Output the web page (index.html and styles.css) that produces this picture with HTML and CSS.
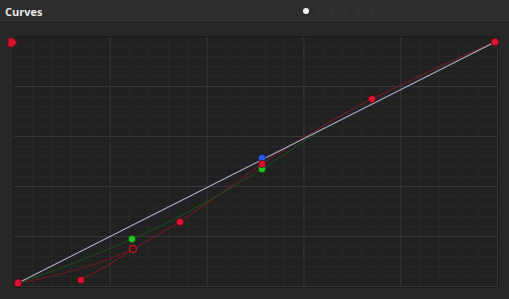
FILE: index.html
```html
<!DOCTYPE html>
<html lang="en">

<head>
    <meta charset="UTF-8">
    <title>Curves</title>
    <link rel="stylesheet" href="styles.css">
</head>

<body>
    <div class="panel">
        <div class="header">
            <span class="title">Curves</span>
            <div class="pager">
                <span class="dot active"></span>
                <span class="dot"></span>
                <span class="dot"></span>
                <span class="dot"></span>
                <span class="dot"></span>
                <span class="dot"></span>
            </div>
        </div>

        <div class="graph-wrap">
            <div class="graph">
                <svg class="curves" width="484" height="250" viewBox="0 0 484 250">
                    <!-- soft clip marker -->
                    <path d="M-6,2 Q-6,1 -5,1 H-1 L3,5.5 L-1,10 H-5 Q-6,10 -6,9 Z" fill="#d3142c" stroke="#6a0a14" stroke-width="0.8"/>

                    <!-- red -->
                    <path d="M4,246 C45,239 90,226 119,212" fill="none" stroke="#6e1a20" stroke-width="1"/>
                    <path d="M67,243 Q95,229 119,212" fill="none" stroke="#7c1a22" stroke-width="1"/>
                    <path d="M119,212 L166,185 C200,162 225,143 248,127 C290,100 322,80 358,62 C400,42 440,22 481,5" fill="none" stroke="#7c1a22" stroke-width="1"/>

                    <!-- green -->
                    <path d="M4,246 C50,231 90,214 118,202 C170,180 215,152 248,132 C280,112 300,96 321,86 L481,5" fill="none" stroke="#1c4e1c" stroke-width="1"/>

                    <!-- master -->
                    <path d="M4,246 L481,5" fill="none" stroke="#a7a7c6" stroke-width="1.2"/>

                    <circle cx="119" cy="212" r="3.6" fill="#3a1416" stroke="#b5162a" stroke-width="1.5"/>
                    <circle cx="118" cy="202" r="3.6" fill="#27c427" stroke="#0f4a0f" stroke-width="0.8"/>
                    <circle cx="248" cy="132" r="3.6" fill="#27c427" stroke="#0f4a0f" stroke-width="0.8"/>
                    <circle cx="248" cy="121" r="3.6" fill="#2a5ef0" stroke="#10245e" stroke-width="0.8"/>
                    <circle cx="248" cy="127" r="3.6" fill="#dc1230" stroke="#5e0a12" stroke-width="0.8"/>
                    <circle cx="67" cy="243" r="3.6" fill="#dc1230" stroke="#5e0a12" stroke-width="0.8"/>
                    <circle cx="166" cy="185" r="3.6" fill="#dc1230" stroke="#5e0a12" stroke-width="0.8"/>
                    <circle cx="358" cy="62" r="3.6" fill="#dc1230" stroke="#5e0a12" stroke-width="0.8"/>
                    <circle cx="481" cy="5" r="3.8" fill="#dc1230" stroke="#5e0a12" stroke-width="0.8"/>
                    <circle cx="4" cy="246" r="3.8" fill="#dc1230" stroke="#5e0a12" stroke-width="0.8"/>
                </svg>
            </div>
        </div>
    </div>
</body>

</html>
```

FILE: styles.css
```css
body {
    margin: 0;
    background: #272727;
    font-family: "Open Sans", Arial, sans-serif;
    color: #e8e8e8;
}

.panel {
    width: 509px;
    height: 299px;
    display: flex;
    flex-direction: column;
    overflow: hidden;
}

.header {
    height: 22px;
    background: #2d2d2d;
    border-bottom: 1px solid #1b1b1b;
    display: flex;
    align-items: center;
}

.title {
    font-size: 11px;
    font-weight: bold;
    padding-left: 5px;
    width: 298px;
}

.pager {
    display: flex;
    gap: 7px;
}

.dot {
    width: 6px;
    height: 6px;
    border-radius: 50%;
    background: #313131;
}

.dot.active {
    background: #f4f4f4;
}

.graph-wrap {
    padding: 14px 11px 12px 14px;
}

.graph {
    position: relative;
    width: 484px;
    height: 250px;
    background-color: #212121;
    background-image:
        linear-gradient(to right, #333333 1px, transparent 1px),
        linear-gradient(to bottom, #363636 1px, transparent 1px),
        linear-gradient(to right, #272727 1px, transparent 1px),
        linear-gradient(to bottom, #272727 1px, transparent 1px);
    background-size: 96.8px 100%, 100% 50px, 19.36px 100%, 100% 10px;
    background-position: -1px 0, 0 -1px, -1px 0, 0 -1px;
    box-shadow: 0 0 0 1px #1b1b1b;
}

.curves {
    position: absolute;
    left: 0;
    top: 0;
    overflow: visible;
}
```
